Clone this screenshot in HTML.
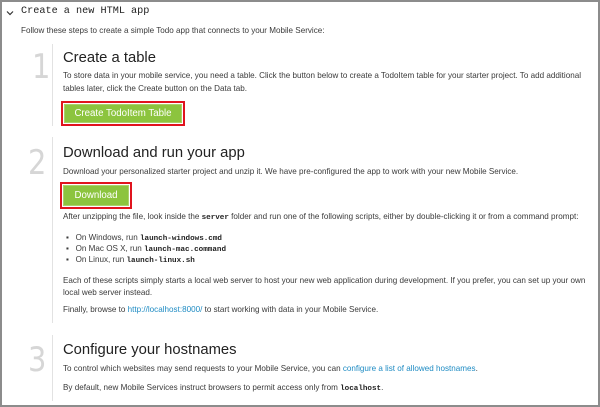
<!DOCTYPE html>
<html><head><meta charset="utf-8"><style>
*{margin:0;padding:0;box-sizing:border-box}
body{width:600px;height:407px;overflow:hidden;background:#fff;position:relative;font-family:"Liberation Sans",sans-serif;color:#333}
.frame{position:absolute;left:0;top:0;width:600px;height:407px;border:2px solid #8c8c8c}
.t{position:absolute;white-space:nowrap;font-size:8.1px;line-height:10px;color:#3a3a3a}
.m{font-family:"Liberation Mono",monospace;font-weight:bold;font-size:7.6px;color:#222}
.h{position:absolute;white-space:nowrap;font-size:14.8px;color:#222;line-height:18px}
.n{position:absolute;font-size:34px;color:#d6d6d6;line-height:34px;font-family:"DejaVu Sans","Liberation Sans",sans-serif;transform:scaleX(0.85);transform-origin:left}
.vl{position:absolute;left:52px;width:1px;background:#e2e2e2}
.btn{position:absolute;border:2px solid #e0141e;padding:1px;background:#fff}
.btn div{background:#8cc43e;color:#fff;font-size:9.7px;text-align:center;height:100%;border:1px solid #a9d26b}
a{color:#1e8bc3;text-decoration:none}
</style></head><body>
<div class="frame"></div>
<svg style="position:absolute;left:6px;top:10px" width="8" height="6"><path d="M1 1.5 L4 4.5 L7 1.5" stroke="#333" stroke-width="1.2" fill="none"/></svg>
<div style="position:absolute;left:21px;top:6px;font-family:'Liberation Mono',monospace;font-size:10.2px;color:#222;white-space:nowrap">Create a new HTML app</div>
<div class="t" style="left:21px;top:26px">Follow these steps to create a simple Todo app that connects to your Mobile Service:</div>

<div class="vl" style="top:44px;height:82px"></div>
<div class="n" style="left:32px;top:50px">1</div>
<div class="h" style="left:63px;top:49px">Create a table</div>
<div class="t" style="left:63px;top:71px">To store data in your mobile service, you need a table. Click the button below to create a TodoItem table for your starter project. To add additional</div>
<div class="t" style="left:63px;top:84px">tables later, click the Create button on the Data tab.</div>
<div class="btn" style="left:61px;top:101px;width:124px;height:25px"><div style="line-height:18px">Create TodoItem Table</div></div>

<div class="vl" style="top:137px;height:186px"></div>
<div class="n" style="left:28px;top:146px">2</div>
<div class="h" style="left:63px;top:144px">Download and run your app</div>
<div class="t" style="left:63px;top:167px">Download your personalized starter project and unzip it. We have pre-configured the app to work with your new Mobile Service.</div>
<div class="btn" style="left:60px;top:182px;width:72px;height:27px"><div style="line-height:20px">Download</div></div>
<div class="t" style="left:63px;top:212px">After unzipping the file, look inside the <span class="m">server</span> folder and run one of the following scripts, either by double-clicking it or from a command prompt:</div>
<div class="t" style="left:66px;top:233px">▪&nbsp;&nbsp;&nbsp;On Windows, run <span class="m">launch-windows.cmd</span></div>
<div class="t" style="left:66px;top:244px">▪&nbsp;&nbsp;&nbsp;On Mac OS X, run <span class="m">launch-mac.command</span></div>
<div class="t" style="left:66px;top:255px">▪&nbsp;&nbsp;&nbsp;On Linux, run <span class="m">launch-linux.sh</span></div>
<div class="t" style="left:63px;top:276px">Each of these scripts simply starts a local web server to host your new web application during development. If you prefer, you can set up your own</div>
<div class="t" style="left:63px;top:288px">local web server instead.</div>
<div class="t" style="left:63px;top:305px">Finally, browse to <a>http://localhost:8000/</a> to start working with data in your Mobile Service.</div>

<div class="vl" style="top:335px;height:66px"></div>
<div class="n" style="left:28px;top:343px">3</div>
<div class="h" style="left:63px;top:341px">Configure your hostnames</div>
<div class="t" style="left:63px;top:364px">To control which websites may send requests to your Mobile Service, you can <a>configure a list of allowed hostnames</a>.</div>
<div class="t" style="left:63px;top:383px">By default, new Mobile Services instruct browsers to permit access only from <span class="m">localhost</span>.</div>
</body></html>
